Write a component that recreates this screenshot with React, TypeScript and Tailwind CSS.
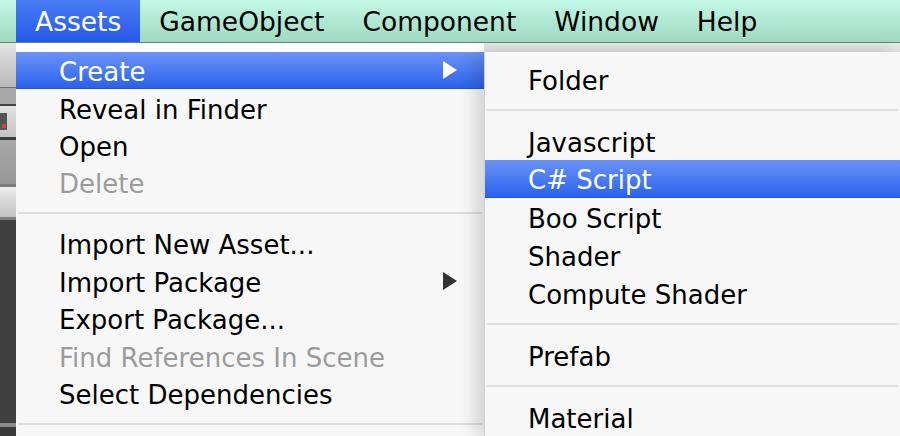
import React from "react";

const font = "font-['DejaVu_Sans','Liberation_Sans',sans-serif]";

function Arrow({ color }: { color: string }) {
  return (
    <svg width="16" height="20" viewBox="0 0 16 20" className="shrink-0">
      <polygon points="1,1 15,10 1,19" fill={color} />
    </svg>
  );
}

function Item({
  label,
  disabled,
  active,
  submenu,
}: {
  label: string;
  disabled?: boolean;
  active?: boolean;
  submenu?: boolean;
}) {
  return (
    <div
      className={
        "h-[38px] flex items-center pl-[43px] pr-[26px] text-[26px] leading-none " +
        (active
          ? "bg-gradient-to-b from-[#6b93f6] to-[#2a61ec] text-white border-b border-[#1e56e3]"
          : disabled
          ? "text-[#9b9b9b]"
          : "text-black")
      }
    >
      <span className="flex-1 whitespace-nowrap pt-[3px]">{label}</span>
      {submenu && <Arrow color={active ? "#ffffff" : "#333333"} />}
    </div>
  );
}

function Sep() {
  return (
    <div className="h-[24px] flex items-center px-[2px]">
      <div className="h-[2px] w-full bg-[#dddddd]" />
    </div>
  );
}

function LeftStrip() {
  return (
    <div className="w-[16px] shrink-0 flex flex-col">
      <div className="h-[44px] bg-gradient-to-b from-[#e4e4e4] to-[#b9b9b9]" />
      <div className="h-[1px] bg-[#707070]" />
      <div className="h-[16px] bg-[#a9a9a9]" />
      <div className="h-[2px] bg-[#404040]" />
      <div className="h-[31px] bg-gradient-to-b from-[#e2e2e2] to-[#c4c4c4] flex items-center">
        <div className="w-[7px] h-[17px] bg-[#555555] flex flex-col justify-end items-center pb-[2px]">
          <div className="w-[4px] h-[4px] bg-[#d84040]" />
        </div>
      </div>
      <div className="h-[3px] bg-[#3c3c3c]" />
      <div className="h-[44px] bg-gradient-to-b from-[#a8a8a8] to-[#989898]" />
      <div className="h-[3px] bg-[#7c7c7c]" />
      <div className="h-[30px] bg-gradient-to-b from-[#ececec] to-[#c2c2c2]" />
      <div className="h-[3px] bg-[#808080]" />
      <div className="h-[203px] bg-[#404040]" />
      <div className="h-[4px] bg-[#8a8a8a]" />
      <div className="flex-1 bg-[#3a3a3a]" />
    </div>
  );
}

export default function App() {
  return (
    <div className={"w-[900px] h-[436px] overflow-hidden flex flex-col bg-[#404040] " + font}>
      <div className="h-[43px] shrink-0 flex items-stretch bg-gradient-to-b from-[#c3f8e6] to-[#9fd9c2] border-b border-[#5d8b7a]">
        <div className="w-[16px]" />
        {["Assets", "GameObject", "Component", "Window", "Help"].map((m, i) => (
          <div
            key={m}
            className={
              "flex items-center px-[19px] pt-[3px] text-[26.5px] leading-none " +
              (i === 0
                ? "bg-gradient-to-b from-[#4a7cf5] to-[#2558e8] text-white"
                : "text-black")
            }
          >
            {m}
          </div>
        ))}
      </div>
      <div className="flex-1 flex min-h-0">
        <LeftStrip />
        <div className="w-[468px] shrink-0 flex flex-col bg-[#f7f7f7]">
          <div className="h-[9px] bg-white" />
          <Item label="Create" active submenu />
          <Item label="Reveal in Finder" />
          <Item label="Open" />
          <Item label="Delete" disabled />
          <Sep />
          <Item label="Import New Asset..." />
          <Item label="Import Package" submenu />
          <Item label="Export Package..." />
          <Item label="Find References In Scene" disabled />
          <Item label="Select Dependencies" />
          <Sep />
        </div>
        <div className="flex-1 flex flex-col min-w-0">
          <div className="h-[13px] bg-gradient-to-b from-[#e8e8e8] to-[#dcdcdc]" />
          <div className="flex-1 flex flex-col bg-[#f7f7f7] shadow-[-10px_0_14px_rgba(0,0,0,0.13)] border-l border-[#cfcfcf]">
            <div className="h-[8px]" />
            <Item label="Folder" />
            <Sep />
            <Item label="Javascript" />
            <Item label="C# Script" active />
            <Item label="Boo Script" />
            <Item label="Shader" />
            <Item label="Compute Shader" />
            <Sep />
            <Item label="Prefab" />
            <Sep />
            <Item label="Material" />
          </div>
        </div>
      </div>
    </div>
  );
}
